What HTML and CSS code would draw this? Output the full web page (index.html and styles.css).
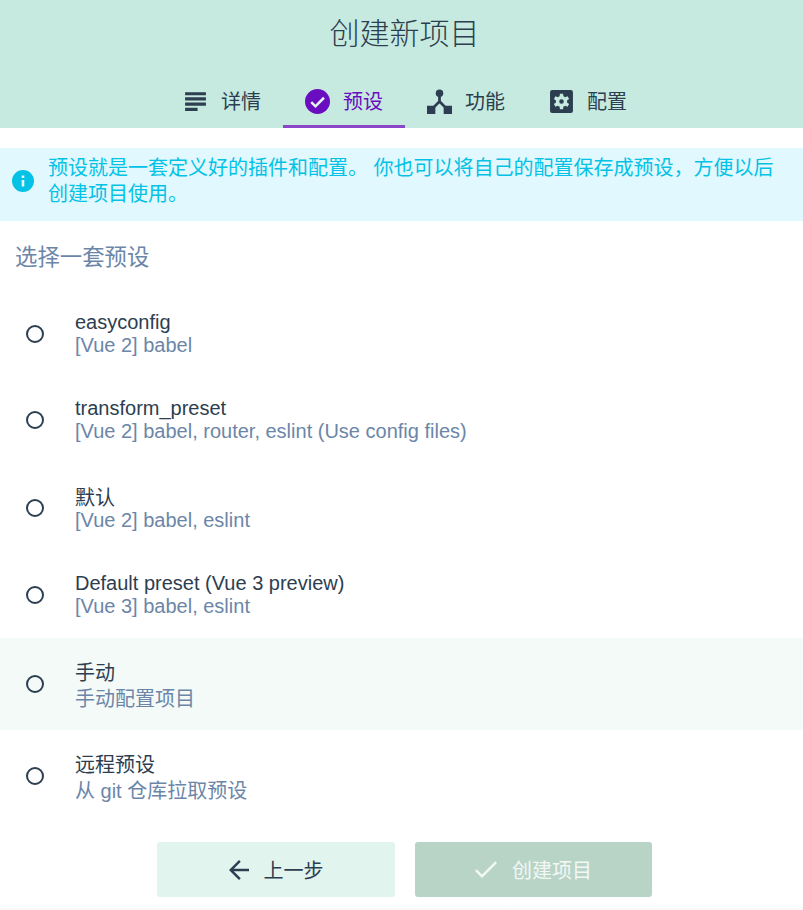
FILE: index.html
```html
<!DOCTYPE html>
<html lang="zh-CN">

<head>
    <meta charset="UTF-8">
    <meta name="viewport" content="width=device-width, initial-scale=1.0">
    <title>创建新项目</title>
    <link rel="stylesheet" href="styles.css">
</head>

<body>
    <header class="header">
        <h1 class="page-title">创建新项目</h1>
        <nav class="tabs">
            <a class="tab">
                <svg class="tab-icon" viewBox="-2 -3 24 24">
                    <path d="M0 0h20v3H0zM0 5h20v3H0zM0 10h20v3H0zM0 15h12v3H0z" />
                </svg>
                详情
            </a>
            <a class="tab active">
                <svg class="tab-icon" viewBox="1 1 22 22">
                    <circle cx="12" cy="12" r="11" />
                    <path class="check-mark" d="M6.500 12.500l3.700 3.700 7.500-7.500" />
                </svg>
                预设
            </a>
            <a class="tab">
                <svg class="tab-icon" viewBox="0 0 24 24">
                    <circle cx="12" cy="4" r="3.600" />
                    <path class="branch" d="M12 4v8L4 20M12 12l8 8" />
                    <path d="M0 16h8v8H0zM16 16h8v8h-8z" />
                </svg>
                功能
            </a>
            <a class="tab">
                <svg class="tab-icon" viewBox="0 0 24 24">
                    <path fill-rule="evenodd" d="M3 1h18a2 2 0 0 1 2 2v18a2 2 0 0 1-2 2H3a2 2 0 0 1-2-2V3a2 2 0 0 1 2-2zm7.500 3.500-.4 2.500c-.6.200-1.100.500-1.600.900l-2.300-1-1.500 2.600 2 1.500a6 6 0 0 0 0 1.900l-2 1.500 1.500 2.600 2.300-1c.5.400 1 .7 1.600.9l.4 2.500h3l.4-2.500c.6-.2 1.100-.5 1.600-.9l2.300 1 1.500-2.600-2-1.500a6 6 0 0 0 0-1.900l2-1.500-1.500-2.600-2.300 1c-.5-.4-1-.7-1.600-.9l-.4-2.500zM12 9.800a2.200 2.200 0 1 1 0 4.400 2.200 2.200 0 0 1 0-4.400z" />
                </svg>
                配置
            </a>
        </nav>
    </header>

    <div class="notice">
        <svg class="notice-icon" viewBox="1 1 22 22">
            <path fill-rule="evenodd" d="M12 1a11 11 0 1 0 0 22 11 11 0 0 0 0-22zm-1.300 5.500h2.600v2.600h-2.600zm0 4.500h2.600v6.500h-2.600z" />
        </svg>
        <p class="notice-text">预设就是一套定义好的插件和配置。 你也可以将自己的配置保存成预设，方便以后创建项目使用。</p>
    </div>

    <h2 class="section-title">选择一套预设</h2>

    <div class="preset-list">
        <div class="preset">
            <span class="radio"></span>
            <div class="preset-info">
                <div class="preset-name">easyconfig</div>
                <div class="preset-desc">[Vue 2] babel</div>
            </div>
        </div>
        <div class="preset">
            <span class="radio"></span>
            <div class="preset-info">
                <div class="preset-name">transform_preset</div>
                <div class="preset-desc">[Vue 2] babel, router, eslint (Use config files)</div>
            </div>
        </div>
        <div class="preset">
            <span class="radio"></span>
            <div class="preset-info shifted">
                <div class="preset-name cjk">默认</div>
                <div class="preset-desc">[Vue 2] babel, eslint</div>
            </div>
        </div>
        <div class="preset">
            <span class="radio"></span>
            <div class="preset-info">
                <div class="preset-name">Default preset (Vue 3 preview)</div>
                <div class="preset-desc">[Vue 3] babel, eslint</div>
            </div>
        </div>
        <div class="preset hover">
            <span class="radio"></span>
            <div class="preset-info shifted">
                <div class="preset-name cjk">手动</div>
                <div class="preset-desc cjk">手动配置项目</div>
            </div>
        </div>
        <div class="preset">
            <span class="radio"></span>
            <div class="preset-info shifted">
                <div class="preset-name cjk">远程预设</div>
                <div class="preset-desc cjk">从 git 仓库拉取预设</div>
            </div>
        </div>
    </div>

    <div class="actions">
        <button class="btn btn-back">
            <svg class="icon-back" viewBox="4 4 16 16">
                <path d="M20 11H7.800l5.600-5.600L12 4l-8 8 8 8 1.400-1.400L7.800 13H20z" />
            </svg>
            上一步
        </button>
        <button class="btn btn-create">
            <svg class="icon-check" viewBox="3.400 5.600 17.600 13.400">
                <path d="M9 16.200 4.800 12l-1.400 1.400L9 19 21 7l-1.400-1.400z" />
            </svg>
            创建项目
        </button>
    </div>
    <div class="page-end"></div>
</body>

</html>
```

FILE: styles.css
```css
* {
    box-sizing: border-box;
}

body {
    margin: 0;
    font-family: "Liberation Sans", "Noto Sans CJK SC", sans-serif;
    font-size: 20px;
    color: #2c3e50;
    background: #fff;
}

.header {
    height: 128px;
    padding-left: 6px;
    background: #c6eadf;
    display: flex;
    flex-direction: column;
    align-items: center;
}

.page-title {
    margin: 12px 0 0;
    font-size: 30px;
    font-weight: 300;
    line-height: 44px;
}

.tabs {
    margin: 18px 0 0 1px;
    display: flex;
    height: 54px;
}

.tab {
    display: flex;
    align-items: center;
    gap: 13px;
    padding: 4px 22px 0;
    border-bottom: 3px solid transparent;
    line-height: 24px;
}

.tab svg {
    fill: #2c3e50;
}

.tab-icon {
    width: 25px;
    height: 25px;
}

.tab.active {
    color: #6a0dc0;
    border-bottom-color: #8a48c8;
}

.tab.active svg {
    fill: #6a0dc0;
}

.check-mark {
    fill: none;
    stroke: #e4f3ee;
    stroke-width: 2.200;
}

.branch {
    fill: none;
    stroke: #2c3e50;
    stroke-width: 2.600;
}

.notice {
    margin-top: 20px;
    height: 73px;
    background: #e1f9fe;
    color: #03c2e6;
    display: flex;
    align-items: center;
    gap: 14px;
    padding: 0 12px 7px;
}

.notice-icon {
    width: 22px;
    height: 22px;
    fill: #03c2e6;
    flex: none;
}

.notice-text {
    margin: 0;
    line-height: 26px;
}

.section-title {
    margin: 20px 0 0;
    padding-left: 15px;
    font-size: 22.400px;
    font-weight: 400;
    line-height: 34px;
    color: #6c86a8;
}

.preset-list {
    margin-top: 16px;
}

.preset {
    display: flex;
    align-items: center;
    gap: 31px;
    padding: 20px 26px;
}

.preset.hover {
    background: #f4faf8;
}

.radio {
    width: 18px;
    height: 18px;
    border: 2px solid #2c3e50;
    border-radius: 50%;
    flex: none;
}

/* cjk lines sit a little low next to the radio */
.preset-info.shifted {
    margin: 2px 0 -2px;
}

.preset-name {
    line-height: 23px;
}

.preset-desc {
    line-height: 23px;
    color: #6c86a8;
}

.preset-name.cjk,
.preset-desc.cjk {
    line-height: 26px;
}

.preset-name.cjk + .preset-desc:not(.cjk) {
    margin: -2px 0 2px;
}

.actions {
    margin-top: 20px;
    padding-left: 6px;
    display: flex;
    justify-content: center;
    gap: 20px;
}

.btn {
    width: 238px;
    height: 55px;
    border: none;
    border-radius: 3px;
    display: flex;
    align-items: center;
    justify-content: center;
    gap: 15px;
    font: inherit;
}

.btn-back {
    background: #e2f4ee;
    color: #2c3e50;
}

.btn-back svg {
    fill: #2c3e50;
}

.btn-create {
    width: 237px;
    background: #b8d4c6;
    color: #f2f8f5;
}

.btn-create svg {
    fill: #f2f8f5;
}

.icon-back {
    width: 20px;
    height: 20px;
}

.icon-check {
    width: 22px;
    height: 17px;
}

.page-end {
    height: 5px;
    margin-top: 8px;
    background: linear-gradient(#fff, #f8f8f8);
}
```
